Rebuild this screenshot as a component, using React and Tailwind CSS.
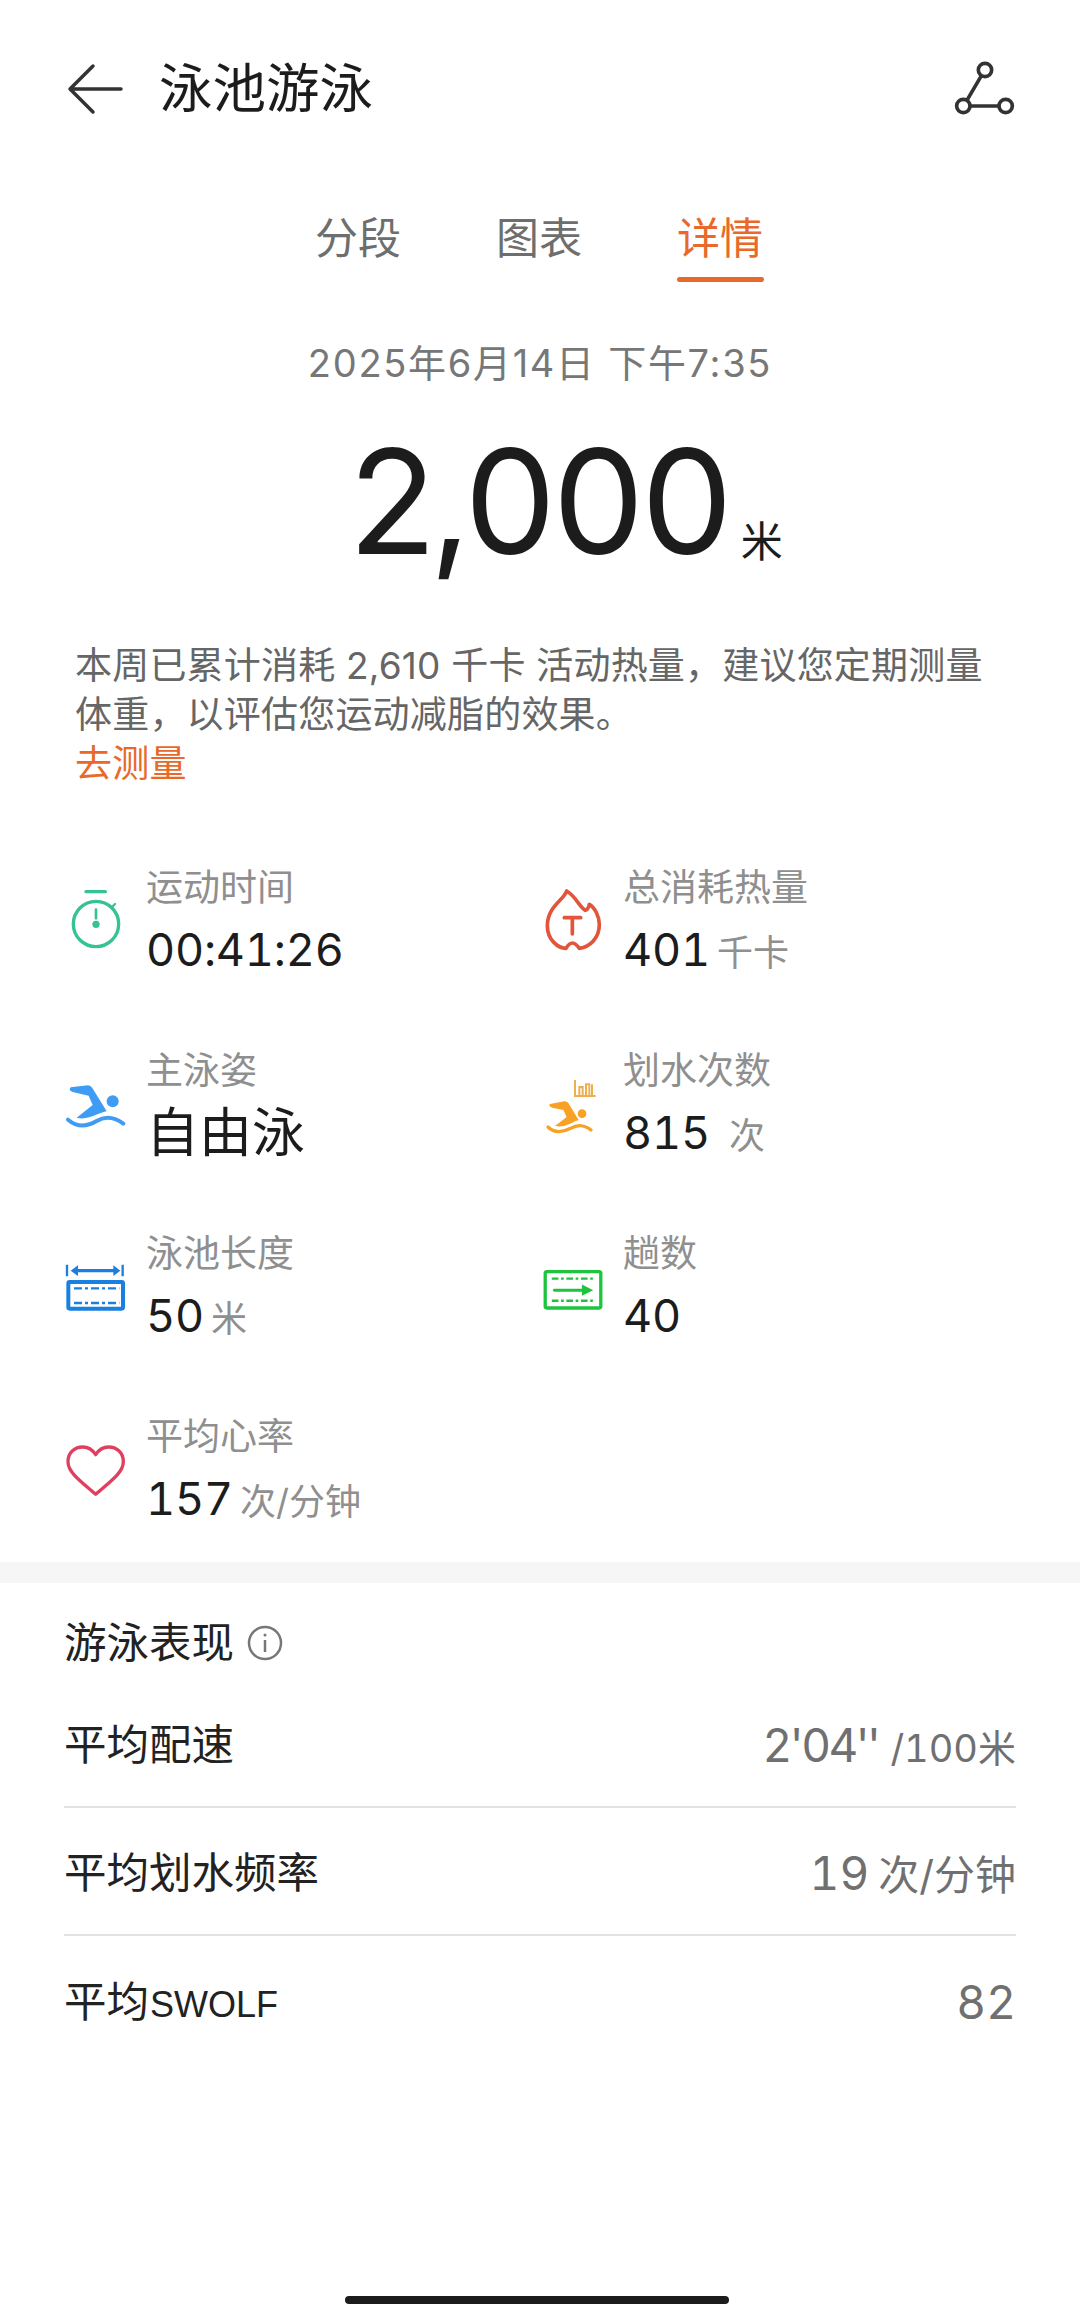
import React from 'react';

const SwimBlue = () => (
  <svg width="72" height="60" viewBox="0 0 216 180" className="shrink-0">
    <path d="M32 31 L84 25 Q92 25 97 33 L140 103 C118 106 84 132 50 122 L98 84 L86 56 L38 45 Q24 40 32 31 Z" fill="#3f9cf5" />
    <circle cx="158" cy="73" r="18" fill="#3f9cf5" />
    <path d="M24 128 C50 150 80 150 110 132 C140 114 165 122 190 140" fill="none" stroke="#3f9cf5" strokeWidth="12" strokeLinecap="round" />
  </svg>
);

const SwimOrange = () => (
  <svg width="66" height="64" viewBox="0 0 198 192" className="shrink-0">
    <path d="M105 15 V63 H167 M118 63 V36 H128 V63 M138 63 V28 H148 V63 M156 63 V28" fill="none" stroke="#eeb04e" strokeWidth="6" />
    <path d="M30 87 L73 79 Q80 78 85 84 L116 135 C98 140 75 160 45 153 L80 126 L70 105 L36 98 Q24 92 30 87 Z" fill="#f7a224" />
    <circle cx="126" cy="116" r="13" fill="#f7a224" />
    <path d="M24 156 C42 175 70 172 92 160 C112 148 135 150 153 165" fill="none" stroke="#f7a224" strokeWidth="10" strokeLinecap="round" />
  </svg>
);

const Stopwatch = () => (
  <svg width="64" height="62" viewBox="72 150 192 186" className="shrink-0">
    <circle cx="168" cy="255" r="68" fill="none" stroke="#35c294" strokeWidth="10" />
    <path d="M138 158 H196" stroke="#35c294" strokeWidth="10" strokeLinecap="round" />
    <path d="M168 212 V238" stroke="#35c294" strokeWidth="8" strokeLinecap="round" />
    <path d="M215 205 L225 195" stroke="#35c294" strokeWidth="7" strokeLinecap="round" />
    <circle cx="168" cy="256" r="11" fill="#35c294" />
  </svg>
);

const Flame = () => (
  <svg width="66" height="70" viewBox="0 0 198 210" className="shrink-0">
    <path d="M80 18 C72 45 22 65 22 122 C22 165 55 190 78 190 C84 180 90 174 98 174 C106 174 112 182 118 190 C150 186 178 160 178 118 C178 95 165 68 148 58 C146 68 142 74 136 76 C118 66 108 34 80 18 Z" fill="none" stroke="#e2553a" strokeWidth="11" strokeLinejoin="round" />
    <path d="M73 98 H122 M97 98 V147" stroke="#e2553a" strokeWidth="11" strokeLinecap="round" fill="none" />
  </svg>
);

const PoolLength = () => (
  <svg width="72" height="60" viewBox="0 0 216 180" className="shrink-0">
    <path d="M21 20 V55 M188 20 V55" stroke="#1b7fe0" strokeWidth="7" />
    <path d="M50 38 H165" stroke="#1b7fe0" strokeWidth="10" />
    <path d="M32 38 L54 22 V54 Z M181 38 L160 22 V54 Z" fill="#1b7fe0" />
    <rect x="25" y="72" width="164" height="80" rx="4" fill="none" stroke="#1b7fe0" strokeWidth="12" />
    <path d="M42 91 H178 M42 135 H178" stroke="#1b7fe0" strokeWidth="7" strokeDasharray="24 9 9 9" fill="none" />
  </svg>
);

const Laps = () => (
  <svg width="64" height="45" viewBox="60 140 192 136" className="shrink-0">
    <rect x="72" y="154" width="168" height="110" rx="5" fill="none" stroke="#1dc43c" strokeWidth="10" />
    <path d="M92 175 H222 M92 242 H222" stroke="#1dc43c" strokeWidth="7" strokeDasharray="20 8 8 8" fill="none" />
    <path d="M100 210 H190" stroke="#1dc43c" strokeWidth="9" strokeLinecap="round" />
    <path d="M183 193 L217 210 L183 227 Z" fill="#1dc43c" />
  </svg>
);

const Heart = () => (
  <svg width="64" height="56" viewBox="72 672 192 168" className="shrink-0">
    <path d="M167 826 C120 785 84 760 84 728 C84 700 105 684 128 684 C145 684 158 693 167 707 C176 693 189 684 206 684 C229 684 250 700 250 728 C250 760 214 785 167 826 Z" fill="none" stroke="#e0405f" strokeWidth="10" strokeLinejoin="round" />
  </svg>
);

const stats = [
  { icon: <Stopwatch />, label: '运动时间', value: '00:41:26' },
  { icon: <Flame />, label: '总消耗热量', value: '401', unit: '千卡' },
  { icon: <SwimBlue />, label: '主泳姿', text: '自由泳', shift: 'translate-y-[4px]' },
  { icon: <SwimOrange />, label: '划水次数', value: '815', unit: '次', wide: true, shift: 'translate-y-[4px]' },
  { icon: <PoolLength />, label: '泳池长度', value: '50', unit: '米', shift: 'translate-y-[2px]' },
  { icon: <Laps />, label: '趟数', value: '40', shift: 'translate-y-[4px]' },
  { icon: <Heart />, label: '平均心率', value: '157', unit: '次/分钟', shift: 'translate-y-[2px]' },
];

const Stat = ({ item }) => (
  <div className="flex h-[183px] items-center">
    <div className={`flex w-[64px] shrink-0 justify-center ${item.shift || ''}`}>{item.icon}</div>
    <div className="ml-[18px] flex flex-col whitespace-nowrap">
      <span className="text-[37px] leading-[46px] text-[#8f8f8f]">{item.label}</span>
      {item.text ? (
        <span className="mt-[14px] h-[50px] text-[53px] leading-[50px] text-[#1c1c1c]">{item.text}</span>
      ) : (
        <span className="mt-[14px] flex h-[50px] items-baseline text-[45px] leading-[50px] tracking-[-0.2px] text-[#1c1c1c] tabular-nums">
          {item.value}
          {item.unit && (
            <span className={`${item.wide ? 'ml-[19px]' : 'ml-[7px]'} text-[36px] tracking-normal text-[#8f8f8f]`}>{item.unit}</span>
          )}
        </span>
      )}
    </div>
  </div>
);

const rows = [
  { label: '平均配速', value: "2'04''", unit: '/100米', tracking: 'tracking-[-2.5px]', unitSize: 'ml-[12px] text-[38px]' },
  { label: '平均划水频率', value: '19', unit: '次/分钟', tracking: 'tracking-[0px]', unitSize: 'ml-[9px] text-[41px]' },
  { label: '平均', suffix: 'SWOLF', value: '82', tracking: 'tracking-[0px]' },
];

export default function App() {
  return (
    <div className="flex h-[2322px] w-[1080px] flex-col overflow-hidden bg-white font-[Inter,'Noto_Sans_CJK_SC',sans-serif]">
      <header className="flex h-[176px] items-center justify-between pl-[64px] pr-[60px]">
        <div className="flex items-center">
          <svg width="60" height="60" viewBox="0 0 60 60" fill="none" stroke="#333" strokeWidth="3.5" strokeLinecap="round" strokeLinejoin="round">
            <path d="M57 31 H7 M29 8 L6 31 L29 54" />
          </svg>
          <h1 className="ml-[35px] translate-y-[1px] text-[53.5px] leading-[60px] font-normal text-[#1c1c1c]">泳池游泳</h1>
        </div>
        <svg width="90" height="75" viewBox="0 0 270 225" fill="none" stroke="#333" strokeWidth="11">
          <circle cx="165" cy="57" r="20" />
          <circle cx="100" cy="165" r="20" />
          <circle cx="227" cy="165" r="20" />
          <path d="M153 76 L112 146 M120 165 H207" />
        </svg>
      </header>

      <nav className="mt-[37px] flex justify-center gap-[94px] pr-[2px]">
        {['分段', '图表', '详情'].map((tab) => {
          const active = tab === '详情';
          return (
            <div key={tab} className="flex flex-col items-center">
              <span className={`text-[43px] leading-[50px] ${active ? 'text-[#e8692a]' : 'text-[#6e6e6e]'}`}>{tab}</span>
              <span className={`mt-[14px] h-[5px] w-[87px] rounded-full ${active ? 'bg-[#e8692a]' : 'bg-transparent'}`} />
            </div>
          );
        })}
      </nav>

      <p className="mt-[58px] text-center text-[38px] leading-[46px] tracking-[1.7px] text-[#777]">2025年6月14日 下午7:35</p>

      <div className="mt-[44px] flex items-baseline justify-center pl-[51px] text-[#1c1c1c]">
        <span className="text-[145px] leading-[144px] tracking-[-3px]">
          2<span className="-mx-[4px]">,</span>000
        </span>
        <span className="ml-[11px] translate-y-[3px] text-[42px] leading-[50px]">米</span>
      </div>

      <p className="mt-[67px] pl-[75px] text-[37px] leading-[49px] tracking-[0.2px] text-[#666] whitespace-nowrap">
        本周已累计消耗 2,610 千卡 活动热量，建议您定期测量
        <br />
        体重，以评估您运动减脂的效果。
        <br />
        <span className="text-[#e8692a]">去测量</span>
      </p>

      <div className="mt-[40px] grid grid-cols-[477px_1fr] pl-[64px]">
        {stats.map((item) => (
          <Stat key={item.label} item={item} />
        ))}
      </div>

      <div className="mt-[2px] h-[21px] bg-[#f6f6f6]" />

      <section className="px-[64px]">
        <div className="mt-[32px] flex items-center">
          <h2 className="text-[42.5px] leading-[56px] font-normal text-[#222]">游泳表现</h2>
          <svg className="ml-[13px]" width="36" height="36" viewBox="0 0 36 36" fill="none" stroke="#777" strokeWidth="2.5">
            <circle cx="18" cy="18" r="16" />
            <path d="M18 15 V27" />
            <circle cx="18" cy="10" r="1.5" fill="#777" stroke="none" />
          </svg>
        </div>
        <div className="mt-[9px]">
          {rows.map((row, index) => (
            <div key={row.label} className={`flex h-[128px] items-center justify-between pt-[4px] ${index < 2 ? 'border-b-2 border-[#e2e2e2]' : ''}`}>
              <span className="flex items-baseline text-[42.5px] text-[#222]">
                {row.label}
                {row.suffix && <span className="ml-[1px] font-['Liberation_Sans'] text-[36px]">{row.suffix}</span>}
              </span>
              <span className={`flex items-baseline text-[46px] text-[#707070] tabular-nums ${row.tracking}`}>
                {row.value}
                {row.unit && <span className={`tracking-normal ${row.unitSize}`}>{row.unit}</span>}
              </span>
            </div>
          ))}
        </div>
      </section>

      <div className="mb-[18px] ml-[345px] mt-auto h-[8px] w-[384px] rounded-full bg-[#1c1c1c]" />
    </div>
  );
}
